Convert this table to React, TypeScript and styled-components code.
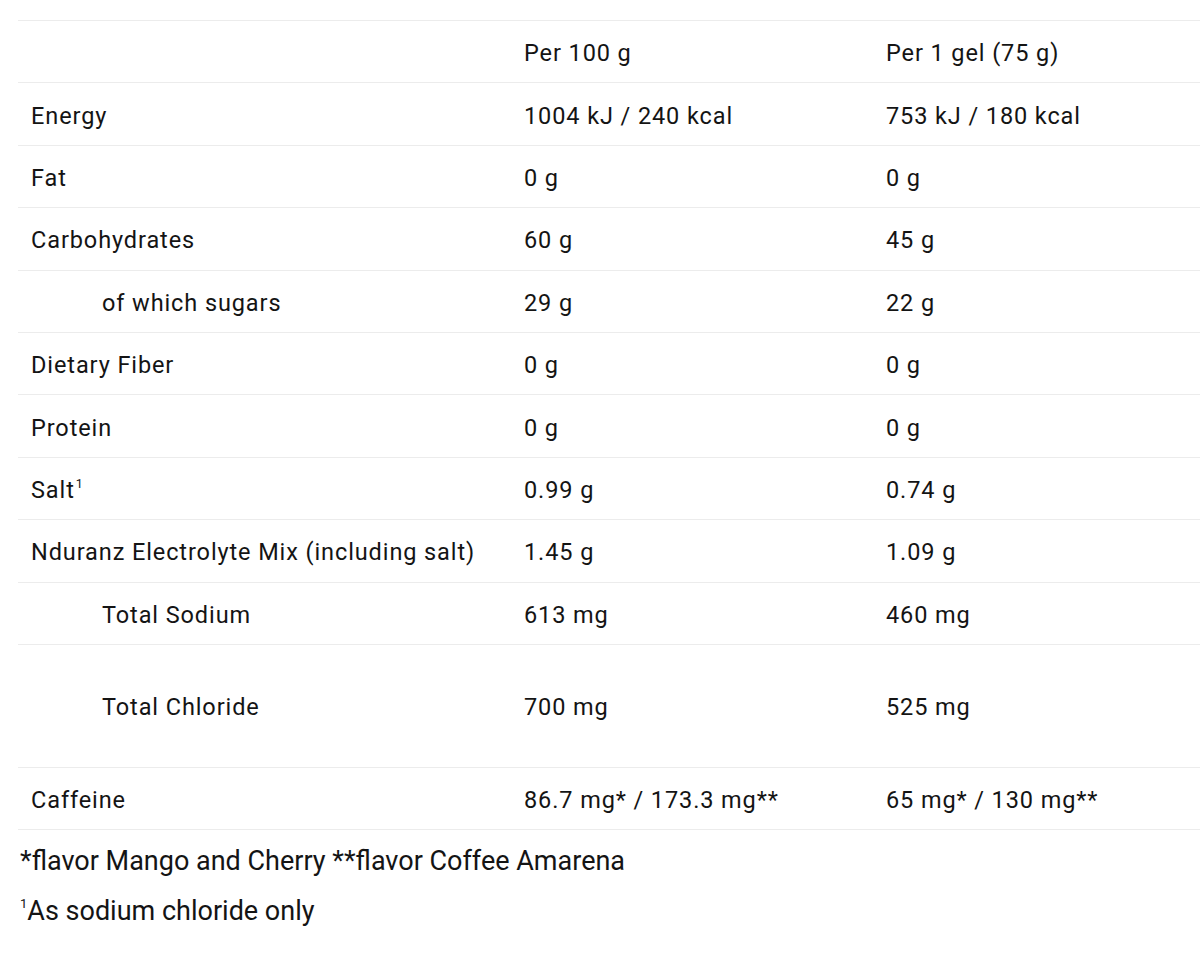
import React from 'react'
import { styled, createGlobalStyle } from 'styled-components'

const GlobalStyle = createGlobalStyle`
    html, body {
        margin: 0;
        padding: 0;
        background: #fff;
    }
    body {
        font-family: Roboto, "Noto Sans", sans-serif;
        color: #141414;
        overflow: hidden;
    }
`

type Row = {
    label: string
    sup?: string
    indent?: boolean
    per100: string
    perGel: string
    tall?: boolean
}

const rows: Row[] = [
    { label: 'Energy', per100: '1004 kJ / 240 kcal', perGel: '753 kJ / 180 kcal' },
    { label: 'Fat', per100: '0 g', perGel: '0 g' },
    { label: 'Carbohydrates', per100: '60 g', perGel: '45 g' },
    { label: 'of which sugars', indent: true, per100: '29 g', perGel: '22 g' },
    { label: 'Dietary Fiber', per100: '0 g', perGel: '0 g' },
    { label: 'Protein', per100: '0 g', perGel: '0 g' },
    { label: 'Salt', sup: '1', per100: '0.99 g', perGel: '0.74 g' },
    { label: 'Nduranz Electrolyte Mix (including salt)', per100: '1.45 g', perGel: '1.09 g' },
    { label: 'Total Sodium', indent: true, per100: '613 mg', perGel: '460 mg' },
    { label: 'Total Chloride', indent: true, per100: '700 mg', perGel: '525 mg', tall: true },
    { label: 'Caffeine', per100: '86.7 mg* / 173.3 mg**', perGel: '65 mg* / 130 mg**' },
]

const App = () => {
    return (
        <>
            <GlobalStyle />
            <Page>
                <Table>
                    <TableRow>
                        <Cell />
                        <Cell>Per 100 g</Cell>
                        <Cell>Per 1 gel (75 g)</Cell>
                    </TableRow>
                    {rows.map((r) => (
                        <TableRow key={r.label} $tall={r.tall}>
                            <Cell $indent={r.indent}>
                                {r.label}
                                {r.sup && <Sup>{r.sup}</Sup>}
                            </Cell>
                            <Cell>{r.per100}</Cell>
                            <Cell>{r.perGel}</Cell>
                        </TableRow>
                    ))}
                </Table>
                <Notes>
                    <p>*flavor Mango and Cherry **flavor Coffee Amarena</p>
                    <p>
                        <NoteSup>1</NoteSup>As sodium chloride only
                    </p>
                </Notes>
            </Page>
        </>
    )
}

const Page = styled.div`
    width: 1200px;
    padding-top: 20px;
`

const Table = styled.div`
    margin-left: 18px;
    border-bottom: 1px solid #ececec;
`

const TableRow = styled.div<{ $tall?: boolean }>`
    display: grid;
    grid-template-columns: 493px 362px 1fr;
    align-items: center;
    height: ${(p) => (p.$tall ? '123px' : '62.4px')};
    border-top: 1px solid #ececec;
    box-sizing: border-box;
`

const Cell = styled.div<{ $indent?: boolean }>`
    padding-left: ${(p) => (p.$indent ? '84px' : '13px')};
    padding-top: 3px;
    font-size: 23.5px;
    letter-spacing: 0.9px;
    white-space: nowrap;
`

const Sup = styled.sup`
    font-size: 12.5px;
    line-height: 1;
    vertical-align: top;
    position: relative;
    top: 2px;
    margin-left: 1px;
    letter-spacing: 0;
`

const NoteSup = styled.sup`
    font-size: 13px;
    line-height: 1;
    vertical-align: top;
    position: relative;
    top: 11px;
`

const Notes = styled.div`
    padding: 6px 0 0 20px;
    font-size: 27px;

    p {
        margin: 0;
        line-height: 50px;
    }
`

export default App
